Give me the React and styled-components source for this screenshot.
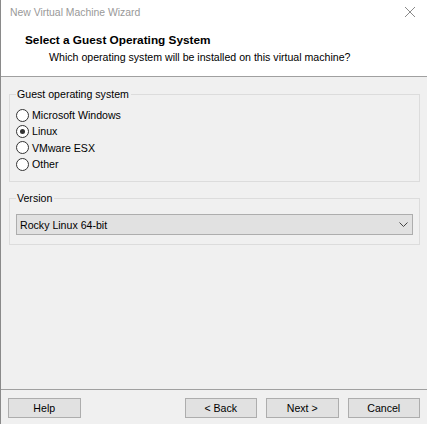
import React, { useState } from "react";
import styled, { createGlobalStyle } from "styled-components";

const GlobalStyle = createGlobalStyle`
  html, body {
    margin: 0;
    padding: 0;
    background: #ffffff;
  }
  body {
    font-family: "Liberation Sans", Arial, sans-serif;
    font-size: 10.6px;
    color: #000000;
  }
`;

const Window = styled.div`
  width: 427px;
  height: 424px;
  display: flex;
  flex-direction: column;
  background: #f0f0f0;
  border-left: 1px solid #8a8a8a;
  box-sizing: border-box;
`;

const TitleBar = styled.div`
  height: 24px;
  display: flex;
  align-items: center;
  justify-content: space-between;
  padding: 0 10px 0 9px;
  background: #ffffff;
  color: #999999;
  font-size: 10.4px;
`;

const CloseButton = styled.span`
  display: flex;
  width: 12px;
  height: 12px;
  margin-right: 1px;
`;

const Header = styled.div`
  height: 53px;
  background: #ffffff;
  display: flex;
  flex-direction: column;
  padding: 9px 0 0 24px;
  box-sizing: border-box;
  border-bottom: 1px solid #a0a0a0;
`;

const HeaderTitle = styled.div`
  font-weight: bold;
  font-size: 11.8px;
  line-height: 15px;
`;

const HeaderSubtitle = styled.div`
  line-height: 14px;
  margin-top: 2px;
  padding-left: 24px;
`;

const Body = styled.div`
  flex: 1;
  display: flex;
  flex-direction: column;
  padding: 10px 7px 0 8px;
`;

const Group = styled.fieldset`
  margin: 0 0 ${(p) => p.$gap || 0}px 0;
  padding: ${(p) => p.$padding};
  border: 1px solid #dcdcdc;
  min-width: 0;
`;

const Legend = styled.legend`
  padding: 0 2px 0 1px;
  line-height: 14px;
`;

const RadioRow = styled.label`
  display: flex;
  align-items: center;
  height: 16.3px;
  gap: 3px;
  cursor: default;
`;

const RadioCircle = styled.span`
  width: 11px;
  height: 11px;
  border: 1px solid #333333;
  border-radius: 50%;
  background: #ffffff;
  display: flex;
  align-items: center;
  justify-content: center;
  &::after {
    content: "";
    width: 5px;
    height: 5px;
    border-radius: 50%;
    background: ${(p) => (p.$checked ? "#333333" : "transparent")};
  }
`;

const Select = styled.div`
  height: 21px;
  box-sizing: border-box;
  border: 1px solid #adadad;
  background: #e1e1e1;
  display: flex;
  align-items: center;
  justify-content: space-between;
  padding: 0 4px 0 3px;
`;

const Footer = styled.div`
  border-top: 1px solid #a0a0a0;
  height: 35px;
  box-sizing: border-box;
  display: flex;
  padding: 8px 7px 0 7px;
`;

const Button = styled.button`
  width: 73px;
  height: 20px;
  box-sizing: border-box;
  border: 1px solid #adadad;
  background: #e1e1e1;
  font-family: inherit;
  font-size: 10.6px;
  color: #000000;
  padding: 0;
  margin-left: ${(p) => p.$ml || 0}px;
`;

const osOptions = ["Microsoft Windows", "Linux", "VMware ESX", "Other"];

const App = () => {
  const [os, setOs] = useState("Linux");

  return (
    <>
      <GlobalStyle />
      <Window>
        <TitleBar>
          <span>New Virtual Machine Wizard</span>
          <CloseButton>
            <svg width="12" height="12" viewBox="0 0 12 12">
              <path d="M1 1 L11 11 M11 1 L1 11" stroke="#8a8a8a" strokeWidth="1" fill="none" />
            </svg>
          </CloseButton>
        </TitleBar>
        <Header>
          <HeaderTitle>Select a Guest Operating System</HeaderTitle>
          <HeaderSubtitle>Which operating system will be installed on this virtual machine?</HeaderSubtitle>
        </Header>
        <Body>
          <Group $padding="6px 6px 9px 6px" $gap={9}>
            <Legend>Guest operating system</Legend>
            {osOptions.map((name) => (
              <RadioRow key={name} onClick={() => setOs(name)}>
                <RadioCircle $checked={os === name} />
                {name}
              </RadioRow>
            ))}
          </Group>
          <Group $padding="9px 6px 9px 6px">
            <Legend>Version</Legend>
            <Select>
              <span>Rocky Linux 64-bit</span>
              <svg width="9" height="6" viewBox="0 0 9 6">
                <path d="M0.5 0.5 L4.5 4.5 L8.5 0.5" stroke="#444444" strokeWidth="1" fill="none" />
              </svg>
            </Select>
          </Group>
        </Body>
        <Footer>
          <Button>Help</Button>
          <Button $ml={104}>&lt; Back</Button>
          <Button $ml={9}>Next &gt;</Button>
          <Button $ml={9}>Cancel</Button>
        </Footer>
      </Window>
    </>
  );
};

export default App;
